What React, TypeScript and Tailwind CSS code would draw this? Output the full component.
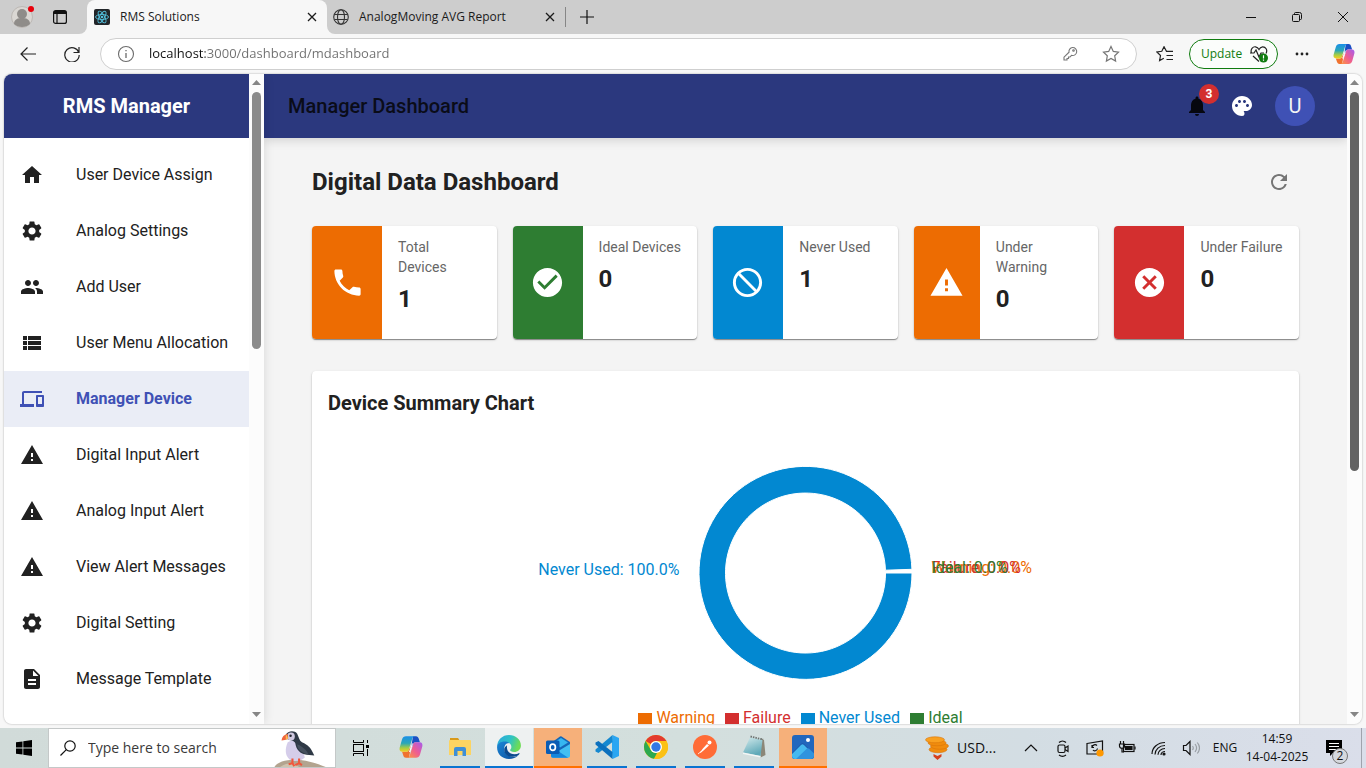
import React from 'react';
import {
  MdHome, MdSettings, MdPeople, MdViewList, MdDevices, MdWarning, MdDescription,
  MdNotifications, MdPalette, MdRefresh, MdPhone, MdCheckCircle, MdBlock, MdCancel,
} from 'react-icons/md';
import type { IconType } from 'react-icons';

interface MenuItem {
  label: string;
  icon: IconType;
  active?: boolean;
}

interface StatCard {
  label: string;
  value: number;
  icon: IconType;
  panel: string;
}

const menuItems: MenuItem[] = [
  { label: 'User Device Assign', icon: MdHome },
  { label: 'Analog Settings', icon: MdSettings },
  { label: 'Add User', icon: MdPeople },
  { label: 'User Menu Allocation', icon: MdViewList },
  { label: 'Manager Device', icon: MdDevices, active: true },
  { label: 'Digital Input Alert', icon: MdWarning },
  { label: 'Analog Input Alert', icon: MdWarning },
  { label: 'View Alert Messages', icon: MdWarning },
  { label: 'Digital Setting', icon: MdSettings },
  { label: 'Message Template', icon: MdDescription },
];

const cards: StatCard[] = [
  { label: 'Total Devices', value: 1, icon: MdPhone, panel: 'w-[70px] bg-[#ed6c02]' },
  { label: 'Ideal Devices', value: 0, icon: MdCheckCircle, panel: 'w-[70px] bg-[#2e7d32]' },
  { label: 'Never Used', value: 1, icon: MdBlock, panel: 'w-[70px] -scale-x-100 bg-[#0288d1]' },
  { label: 'Under Warning', value: 0, icon: MdWarning, panel: 'w-[66px] bg-[#ed6c02]' },
  { label: 'Under Failure', value: 0, icon: MdCancel, panel: 'w-[70px] bg-[#d32f2f]' },
];

const legend = [
  { label: 'Warning', text: 'text-[#ed6c02]', box: 'bg-[#ed6c02]' },
  { label: 'Failure', text: 'text-[#d32f2f]', box: 'bg-[#d32f2f]' },
  { label: 'Never Used', text: 'text-[#0288d1]', box: 'bg-[#0288d1]' },
  { label: 'Ideal', text: 'text-[#2e7d32]', box: 'bg-[#2e7d32]' },
];

/* ---------- logos ---------- */

const CopilotLogo = ({ id, className }: { id: string; className?: string }) => (
  <svg viewBox="0 0 24 24" className={className}>
    <defs>
      <linearGradient id={`${id}a`} x1="0" y1="0" x2="0" y2="1">
        <stop offset="0" stopColor="#1b8fe8" />
        <stop offset=".45" stopColor="#2aa7b8" />
        <stop offset=".75" stopColor="#a4cc45" />
        <stop offset="1" stopColor="#f7cf1d" />
      </linearGradient>
      <linearGradient id={`${id}b`} x1="1" y1="0" x2="0" y2="1">
        <stop offset="0" stopColor="#a45cf0" />
        <stop offset=".5" stopColor="#ee5c92" />
        <stop offset="1" stopColor="#ff9a3c" />
      </linearGradient>
    </defs>
    <path d="M14 1.200h3c1.500 0 2.300 1 2.700 2.300l1.200 3.700h-4.400c-1.300 0-2 .8-2.300 2L12 13z" fill="#1a4fc4" />
    <path d="M10 22.800H7c-1.500 0-2.300-1-2.700-2.300l-1.200-3.700h4.400c1.300 0 2-.8 2.300-2L12 11z" fill="#f0722e" />
    <path d="M7 1.200h9c-1.500 0-2.300 1-2.800 2.600L9.800 14.800c-.4 1.400-1.200 2-2.600 2H3.400c-2.500 0-3.300-2-2.700-4.300L3 4.500C3.700 2.300 5 1.200 7 1.200z" fill={`url(#${id}a)`} />
    <path d="M17 22.800H8c1.500 0 2.300-1 2.800-2.600l3.400-11c.4-1.400 1.200-2 2.600-2h3.800c2.500 0 3.300 2 2.700 4.300L21 19.500c-.7 2.200-2 3.300-4 3.300z" fill={`url(#${id}b)`} />
    <path d="M12.900 8.500h1.100l-2.800 8.500h-1.200z" fill="#fff" />
  </svg>
);

const ReactFavicon = () => (
  <svg viewBox="0 0 16 16" className="size-4 shrink-0">
    <rect width="16" height="16" rx="2" fill="#222529" />
    <g fill="none" stroke="#53c1de" strokeWidth=".9">
      <ellipse cx="8" cy="8" rx="6.500" ry="2.500" />
      <ellipse cx="8" cy="8" rx="6.500" ry="2.500" transform="rotate(60 8 8)" />
      <ellipse cx="8" cy="8" rx="6.500" ry="2.500" transform="rotate(120 8 8)" />
    </g>
    <circle cx="8" cy="8" r="1.300" fill="#53c1de" />
  </svg>
);

const Puffin = () => (
  <svg viewBox="0 0 56 40" className="mr-1.5 h-full w-14">
    <path d="M0 40c2-4 8-6 14-7s10-2 15 0c8 1 18 4 25 7z" fill="#b3a48f" />
    <path d="M6 40c4-3 8-4 14-4l6 4z" fill="#cfc3ae" />
    <path d="M14 14c-3 7-3 14 2 18 5 3 12 2 16-2l-4-14-8-5z" fill="#d5cdea" />
    <path d="M12 6c2-4 9-5 12-1 2 4 2 7 5 9 7 3 9 6 11 10l2 4-8-1c-7-1-11-5-12-12-1-3-5-3-8-4z" fill="#2f3946" />
    <path d="M24 16c5 2 10 6 12 11-7-2-12-5-12-11z" fill="#46505e" />
    <ellipse cx="17.500" cy="8" rx="4" ry="4.200" fill="#cfc8e0" />
    <circle cx="17" cy="7" r="1.300" fill="#20242c" />
    <path d="M14 5c-4 1-6 3-6.500 7 2 0 5-.5 7-2z" fill="#f0663c" />
    <path d="M12.500 5.800c-.8 1.800-.8 3.600-.2 5.300l2.200-1z" fill="#f5bd54" />
    <path d="M19 31v5l-4 1m4-1 2 3M26 31v5l-4 2m4-2 3 2" stroke="#f0563c" strokeWidth="2.200" fill="none" />
  </svg>
);

const ExplorerLogo = () => (
  <svg viewBox="0 0 24 24" className="size-6">
    <path d="M2 3h8l2 3H2z" fill="#d99a1b" />
    <path d="M2 5h20a1 1 0 0 1 1 1v14H1V6a1 1 0 0 1 1-1z" fill="#fcd462" />
    <path d="M6 21v-7a2 2 0 0 1 2-2h8a2 2 0 0 1 2 2v7h-3.500v-5h-5v5z" fill="#3f8fd6" />
  </svg>
);

const EdgeLogo = () => (
  <svg viewBox="0 0 24 24" className="size-[26px]">
    <defs>
      <linearGradient id="edgeTop" x1="0" y1="0" x2="1" y2=".3">
        <stop offset="0" stopColor="#2aa6dd" />
        <stop offset=".6" stopColor="#2fc3c4" />
        <stop offset="1" stopColor="#6ddc55" />
      </linearGradient>
      <linearGradient id="edgeBody" x1="0" y1="0" x2="1" y2="1">
        <stop offset="0" stopColor="#1b86d6" />
        <stop offset="1" stopColor="#0c4f9c" />
      </linearGradient>
    </defs>
    <path d="M1 12C1 5.500 6 1 12 1s11 4.300 11 9.500c0 3.800-2.900 6-6.200 6-2.500 0-3.800-.8-3.800-1.700 0-.6 1.200-1 1.200-2.900 0-2.300-2.200-4.400-5.700-4.400C4 7.500 1.300 10 1 12z" fill="url(#edgeTop)" />
    <path d="M1 12c.2-3 3.300-5 7-5 1.500 0 3 .4 4.200 1.200C9 8.200 7.600 11 7.600 13.500c0 4.500 4 7.500 8 7.500 1.700 0 3.500-.5 5-1.400C18.500 22 15.500 23 12 23 5.500 23 .8 18 1 12z" fill="url(#edgeBody)" />
    <path d="M10.200 10.300c-1.600 1-2.600 2.300-2.600 4.200 0 4 3.600 6.800 8 6.500 2-.1 3.800-.7 5-1.400 1-.9 1.400-1.600.9-2-4.800 2.700-12.600.6-11.300-7.300z" fill="#0b4a8e" />
  </svg>
);

const OutlookLogo = () => (
  <svg viewBox="0 0 24 24" className="size-6">
    <path d="M5 8 14 1.500a1.500 1.500 0 0 1 1.600 0L24 7v5L14 18 5 12z" fill="#1566b7" />
    <path d="M8 7.500 15 3l7 4.500-8 5z" fill="#36b6f0" />
    <path d="M24 9v12a1.800 1.800 0 0 1-1.800 1.800H6.800A1.800 1.800 0 0 1 5 21v-4l9-2z" fill="#43bff2" />
    <path d="M5 15v6a1.800 1.800 0 0 0 1.800 1.800h15.400L12 16z" fill="#1687dc" />
    <rect x="0" y="5.500" width="13.500" height="13.500" rx="1.500" fill="#0a5cb5" />
    <ellipse cx="6.700" cy="12.200" rx="2.700" ry="3.100" fill="none" stroke="#fff" strokeWidth="1.700" />
  </svg>
);

const VsCodeLogo = () => (
  <svg viewBox="0 0 24 24" className="size-6">
    <path d="M17.500 0 24 3v18l-6.500 3L17 17V7z" fill="#2aa6f2" />
    <path d="M17.500 0v7L3.500 18 .5 16.500v-2z" fill="#1488d0" />
    <path d="M17.500 24v-7L3.500 6 .5 7.500v2z" fill="#0b70bd" />
  </svg>
);

const ChromeLogo = () => (
  <svg viewBox="0 0 24 24" className="size-6">
    <circle cx="12" cy="12" r="12" fill="#fbc116" />
    <path d="M1.600 6A12 12 0 0 1 22.400 6H12a6 6 0 0 0-5.200 3z" fill="#e33b2e" />
    <path d="M1.600 6 6.800 15A6 6 0 0 0 12 18h1l-3 5.800A12 12 0 0 1 1.600 6z" fill="#2da94f" />
    <path d="M22.400 6A12 12 0 0 1 12 24h-2l7.200-9A6 6 0 0 0 12 6z" fill="#fbc116" />
    <circle cx="12" cy="12" r="6" fill="#fff" />
    <circle cx="12" cy="12" r="4.700" fill="#3478e5" />
  </svg>
);

const PostmanLogo = () => (
  <svg viewBox="0 0 24 24" className="size-6">
    <circle cx="12" cy="12" r="12" fill="#ff6c37" />
    <path d="m14 9 2 1.500-5.500 5-3 2.500-.5-.5 2.500-3.500z" fill="#fff" />
    <circle cx="16.500" cy="7.500" r="2" fill="#fff" />
    <path d="m5 19 3-2.500" stroke="#fff" strokeWidth=".8" />
  </svg>
);

const NotepadLogo = () => (
  <svg viewBox="0 0 24 24" className="size-6">
    <defs>
      <linearGradient id="padFill" x1="0" y1="0" x2=".4" y2="1">
        <stop offset="0" stopColor="#d3eaec" />
        <stop offset="1" stopColor="#5fa9b8" />
      </linearGradient>
    </defs>
    <path d="m19 3 3 2 1.500 15-5 2.500z" fill="#8b8778" />
    <path d="M8 2.500 20.500 5l-2 16L1 17.500z" fill="url(#padFill)" />
    <path d="m1 17.500 17.500 3.500v1.500L1 19z" fill="#f2f6f5" />
    <path d="m8.500 1.500 12.500 3" stroke="#6d7473" strokeWidth="1.800" strokeDasharray="1.500 1" />
  </svg>
);

const PhotosLogo = () => (
  <svg viewBox="0 0 24 24" className="size-6">
    <rect x="1" y="0" width="22" height="24" rx="3" fill="#2267bd" />
    <path d="m1 18 9-9a2 2 0 0 1 3 0l10 10v2a3 3 0 0 1-3 3H4a3 3 0 0 1-3-3z" fill="#1a56a8" />
    <path d="m1 19 9-9a2 2 0 0 1 3 0l4 4-10 10H4a3 3 0 0 1-3-3z" fill="#45b9ef" />
    <path d="M5 24 15.500 14a2 2 0 0 1 3 0l4.500 4.500V21a3 3 0 0 1-3 3z" fill="#2f93de" />
    <circle cx="17" cy="5" r="2" fill="#fff" />
  </svg>
);

/* ---------- browser frame ---------- */

const CloseIcon = () => (
  <svg viewBox="0 0 10 10" className="size-[10px]" stroke="#1b1b1b" strokeWidth="1.300">
    <path d="m1 1 8 8M9 1 1 9" />
  </svg>
);

const TabStrip = () => (
  <div className="flex h-[34px] shrink-0 bg-[#f7f7f7] text-xs text-[#1b1b1b]">
    <div className="flex w-[87px] items-center rounded-br-lg bg-[#cdcdcd] pl-[11px]">
      <button aria-label="Profile" className="relative">
        <svg viewBox="0 0 22 22" className="size-[22px]">
          <circle cx="11" cy="11" r="10.500" fill="#dad7d3" stroke="#bcb8b4" />
          <circle cx="11" cy="8" r="5" fill="#8f8c89" />
          <path d="M3 18c0-5 4-6 8-6s8 1 8 6c-4 4-12 4-16 0z" fill="#8f8c89" />
        </svg>
        <span className="absolute top-0 -right-px size-[6px] rounded-full bg-[#e8000b]" />
      </button>
      <button aria-label="Tab actions" className="ml-5">
        <svg viewBox="0 0 14 14" className="size-[14px]" fill="none" stroke="#111">
          <rect x=".6" y=".6" width="12.800" height="12.800" rx="2" strokeWidth="1.200" />
          <path d="M1 2.500h12" strokeWidth="3" />
          <path d="M4 3v10" strokeWidth="1.200" />
        </svg>
      </button>
    </div>
    <div className="w-60 bg-[#cdcdcd]">
      <div className="flex h-full items-center rounded-t-lg bg-[#f7f7f7] pr-[10px] pl-[7px]">
        <ReactFavicon />
        <span className="ml-[10px] flex-1">RMS Solutions</span>
        <button aria-label="Close tab"><CloseIcon /></button>
      </div>
    </div>
    <div className="flex flex-1 items-center rounded-bl-lg bg-[#cdcdcd]">
      <div className="flex h-5 w-[239px] items-center border-r border-[#868686] pr-[10px] pl-[6px]">
        <svg viewBox="0 0 16 16" className="size-4" fill="none" stroke="#333" strokeWidth="1.100">
          <circle cx="8" cy="8" r="7.300" />
          <ellipse cx="8" cy="8" rx="3.500" ry="7.300" />
          <path d="M1.500 5.500h13M1.500 10.500h13" />
        </svg>
        <span className="ml-[10px] flex-1">AnalogMoving AVG Report</span>
        <button aria-label="Close tab"><CloseIcon /></button>
      </div>
      <button aria-label="New tab" className="ml-[14px]">
        <svg viewBox="0 0 14 14" className="size-[14px]" stroke="#111" strokeWidth="1.200">
          <path d="M7 0v14M0 7h14" />
        </svg>
      </button>
      <div className="ml-auto flex">
        <button aria-label="Minimize" className="flex w-[46px] items-center justify-center">
          <svg viewBox="0 0 10 10" className="size-[10px]" stroke="#111"><path d="M0 5.500h10" /></svg>
        </button>
        <button aria-label="Restore" className="flex w-[46px] items-center justify-center">
          <svg viewBox="0 0 10 10" className="size-[10px]" fill="none" stroke="#111">
            <rect x=".5" y="2.500" width="7" height="7" rx="1" />
            <path d="M2.500 2.500v-1a1 1 0 0 1 1-1h4a2 2 0 0 1 2 2v4a1 1 0 0 1-1 1h-1" />
          </svg>
        </button>
        <button aria-label="Close" className="flex w-[46px] items-center justify-center">
          <svg viewBox="0 0 10 10" className="size-[10px]" stroke="#111"><path d="m0 0 10 10M10 0 0 10" /></svg>
        </button>
      </div>
    </div>
  </div>
);

const Toolbar = () => (
  <div className="flex h-10 shrink-0 items-center pr-1 pl-1.5">
    <button aria-label="Back" className="flex w-11 justify-center">
      <svg viewBox="0 0 16 14" className="h-[14px] w-4" fill="none" stroke="#222" strokeWidth="1.200">
        <path d="M16 7H1M7.500.5 1 7l6.500 6.500" />
      </svg>
    </button>
    <button aria-label="Refresh page" className="flex w-11 justify-center">
      <svg viewBox="0 0 16 16" className="size-4" fill="none" stroke="#222" strokeWidth="1.200">
        <path d="M14.800 6.500A7.200 7.200 0 1 0 15.200 9M15 1v5.500H9.500" />
      </svg>
    </button>
    <div className="ml-1.5 flex h-8 flex-1 items-center rounded-full border border-[#cfcfcf] bg-white px-4">
      <svg viewBox="0 0 18 18" className="size-[18px] shrink-0" fill="none" stroke="#6b6b6b" strokeWidth="1.100">
        <circle cx="9" cy="9" r="7.500" />
        <path d="M9 8v5M9 5v1.300" strokeWidth="1.300" />
      </svg>
      <input
        aria-label="Address"
        defaultValue="localhost:3000/dashboard/mdashboard"
        className="ml-[14px] min-w-0 flex-1 bg-[linear-gradient(90deg,#111_56px,#6f6f6f_56px)] bg-clip-text text-[13px] text-transparent outline-none"
      />
      <button aria-label="Passwords" className="mr-6">
        <svg viewBox="0 0 16 16" className="size-4" fill="none" stroke="#767676" strokeWidth="1.100">
          <path d="M10.500 1.500a4 4 0 1 1-1 7.800L8 11H6.500v1.500H5V14H2v-2.800l5-5a4 4 0 0 1 3.500-4.700z" />
          <circle cx="11.500" cy="4.500" r=".8" />
        </svg>
      </button>
      <button aria-label="Add to favorites">
        <svg viewBox="0 0 18 18" className="size-[18px]" fill="none" stroke="#767676" strokeWidth="1.200">
          <path d="m9 1.500 2.300 4.900 5.200.7-3.800 3.700.9 5.300L9 13.500l-4.600 2.600.9-5.300L1.500 7.100l5.200-.7z" />
        </svg>
      </button>
    </div>
    <button aria-label="Favorites" className="ml-1 flex w-12 justify-center">
      <svg viewBox="0 0 18 16" className="h-4 w-[18px]" fill="none" stroke="#222" strokeWidth="1.200">
        <path d="M10.500 5.300 8 .8 5.800 5.300.9 6l3.600 3.500-.9 5 4.200-2.300M8 .8l2.500 4.500H17M10.500 9.500H17M10.500 13.500H17" />
      </svg>
    </button>
    <button className="flex h-[30px] w-[89px] items-center justify-between rounded-full border border-[#107c10] bg-[#fbfdfb] pr-[9px] pl-[11px] text-xs text-[#107c10]">
      Update
      <svg viewBox="0 0 18 18" className="size-[18px]" fill="none" stroke="#222" strokeWidth="1.200">
        <path d="M1.500 8C0 4 3 1.500 5.500 1.800 7.500 2 8.500 3.500 9 4.500c.5-1 1.500-2.500 3.500-2.700 3-.2 5.500 3 3.500 6.700M3 11l6 5.500" />
        <path d="M0 8h4l2-3 3 7 2-4h3" />
        <circle cx="13.500" cy="13" r="4.500" fill="#107c10" stroke="none" />
        <path d="M13.500 10.300v3.200M13.500 14.500v1.200" stroke="#fff" />
      </svg>
    </button>
    <button aria-label="Settings and more" className="flex w-12 justify-center">
      <svg viewBox="0 0 14 4" className="h-1 w-[14px]" fill="#222">
        <circle cx="2" cy="2" r="1.400" /><circle cx="7" cy="2" r="1.400" /><circle cx="12" cy="2" r="1.400" />
      </svg>
    </button>
    <button aria-label="Copilot" className="flex w-9 justify-center">
      <CopilotLogo id="cpTop" className="h-[22px] w-6" />
    </button>
  </div>
);

const Arrow = ({ down }: { down?: boolean }) => (
  <svg viewBox="0 0 9 5" className="h-[5px] w-[9px] shrink-0" fill="#868686">
    <path d={down ? 'M0 0h9L4.500 5z' : 'M0 5h9L4.500 0z'} />
  </svg>
);

const Scrollbar = ({ thumb }: { thumb: string }) => (
  <div className="flex w-[15px] shrink-0 flex-col items-center justify-between bg-[#fcfcfc] pt-[6px] pb-[7px]">
    <Arrow />
    <div className="mt-[7px] flex w-[9px] flex-1 flex-col">
      <div className={`rounded-full ${thumb}`} />
    </div>
    <Arrow down />
  </div>
);

/* ---------- application ---------- */

const Sidebar = () => (
  <aside className="z-10 flex shrink-0 bg-white shadow-[0_0_10px_rgba(0,0,0,0.12)]">
    <div className="w-[245px] overflow-hidden">
      <div className="flex h-16 items-center justify-center bg-[#2b387e]">
        <h1 className="text-xl font-bold text-white">RMS Manager</h1>
      </div>
      <nav className="border-t border-white pt-2">
        {menuItems.map(({ label, icon: Icon, active }) => (
          <a
            key={label}
            href="#"
            className={`flex h-14 items-center gap-8 pl-4 text-base whitespace-nowrap
              ${active ? 'bg-[#eaedf6] font-bold text-[#3f51b5]' : 'text-[#212121]'}`}
          >
            <Icon size={24} className="shrink-0" />
            {label}
          </a>
        ))}
      </nav>
    </div>
    <Scrollbar thumb="h-[257px] bg-[#8b8b8b]" />
  </aside>
);

const AppHeader = () => (
  <header className="flex h-16 shrink-0 items-center bg-[#2b387e] pr-8 pl-6 shadow-[0_2px_10px_rgba(0,0,0,0.15)]">
    <h2 className="flex-1 text-xl font-medium text-[#0a0c18]">Manager Dashboard</h2>
    <div className="flex items-center gap-[21px]">
      <button aria-label="Notifications" className="relative text-[#06070f]">
        <MdNotifications size={24} />
        <span className="absolute -top-[10px] -right-[10px] flex size-5 items-center justify-center rounded-full bg-[#d32f2f] text-xs font-bold text-white">3</span>
      </button>
      <button aria-label="Theme" className="text-white"><MdPalette size={24} /></button>
      <button className="flex size-10 items-center justify-center rounded-full bg-[#3f51b5] text-xl text-[#f4f4f4]">U</button>
    </div>
  </header>
);

const DeviceChart = () => (
  <svg viewBox="0 0 600 264" className="mt-4 h-[264px] w-full overflow-visible text-base">
    <path
      d="M406.440 134.300A106.500 106.500 0 1 0 406.500 138H380A80 80 0 1 1 379.950 135.210Z"
      fill="#0288d1"
      stroke="#fff"
    />
    <text x="174" y="140" textAnchor="end" fill="#0288d1">Never Used: 100.0%</text>
    <text x="426" y="138" fill="#ed6c02">Warning: 0.0%</text>
    <text x="426" y="138" fill="#d32f2f">Failure: 0.0%</text>
    <text x="426" y="138" fill="#2e7d32">Ideal: 0.0%</text>
  </svg>
);

const Dashboard = () => (
  <main className="flex-1 px-12 pt-6">
    <div className="mb-6 flex h-10 items-center justify-between">
      <h3 className="text-2xl font-bold text-[#212121]">Digital Data Dashboard</h3>
      <button aria-label="Refresh" className="flex size-10 items-center justify-center text-[#757575]">
        <MdRefresh size={24} />
      </button>
    </div>

    <div className="grid grid-cols-5 gap-4">
      {cards.map(({ label, value, icon: Icon, panel }) => (
        <div key={label} className="flex overflow-hidden rounded bg-white shadow-[0_1px_1px_rgba(0,0,0,0.4),0_1px_3px_rgba(0,0,0,0.12)]">
          <div className={`flex shrink-0 items-center justify-center text-white ${panel}`}>
            <Icon size={35} />
          </div>
          <div className="flex-1 pt-[11px] pr-4 pb-6 pl-4">
            <p className="text-sm text-[#666]">{label}</p>
            <p className="mt-1.5 text-2xl font-bold text-[#212121]">{value}</p>
          </div>
        </div>
      ))}
    </div>

    <section className="mt-8 rounded bg-white p-4 shadow-[0_1px_1px_rgba(0,0,0,0.4),0_1px_3px_rgba(0,0,0,0.12)]">
      <h3 className="text-xl leading-8 font-bold text-[#212121]">Device Summary Chart</h3>
      <DeviceChart />
      <ul className="mt-[7px] flex justify-center gap-[10px] pr-2.5">
        {legend.map((item) => (
          <li key={item.label} className={`flex items-center gap-1 ${item.text}`}>
            <span className={`h-[11px] w-[14px] ${item.box}`} />
            {item.label}
          </li>
        ))}
      </ul>
    </section>
  </main>
);

/* ---------- taskbar ---------- */

const taskApps = [
  { name: 'Copilot', logo: <CopilotLogo id="cpTask" className="size-6" />, slot: '', line: '' },
  { name: 'File Explorer', logo: <ExplorerLogo />, slot: '', line: 'w-10 bg-[#0a74d1]' },
  { name: 'Edge', logo: <EdgeLogo />, slot: 'bg-[#eef1f1]', line: 'w-12 bg-[#0a74d1]' },
  { name: 'Outlook', logo: <OutlookLogo />, slot: 'bg-[#f6b07a]', line: 'w-12 bg-[#ff7000]' },
  { name: 'Visual Studio Code', logo: <VsCodeLogo />, slot: '', line: 'w-10 bg-[#0a74d1]' },
  { name: 'Chrome', logo: <ChromeLogo />, slot: '', line: 'w-10 bg-[#0a74d1]' },
  { name: 'Postman', logo: <PostmanLogo />, slot: '', line: 'w-10 bg-[#0a74d1]' },
  { name: 'Notepad', logo: <NotepadLogo />, slot: '', line: 'w-10 bg-[#0a74d1]' },
  { name: 'Photos', logo: <PhotosLogo />, slot: 'bg-[#f6b07a]', line: 'w-12 bg-[#ff7000]' },
];

const TrayButton = ({ label, children }: { label: string; children: React.ReactNode }) => (
  <button aria-label={label} className="flex w-8 items-center justify-center">
    <svg viewBox="0 0 18 18" className="size-[18px]" fill="none" stroke="#111" strokeWidth="1.200">{children}</svg>
  </button>
);

const Taskbar = () => (
  <footer className="mt-1 flex h-10 shrink-0 bg-[linear-gradient(90deg,#d1dbd9,#d3dfdd_50%,#d3dde3_75%,#dadeea)] text-xs text-[#111]">
    <button aria-label="Start" className="flex w-12 items-center justify-center">
      <svg viewBox="0 0 16 16" className="size-4" fill="#000">
        <path d="M0 2.300 6.500 1.400v6.100H0zM7.300 1.300 16 0v7.500H7.300zM0 8.400h6.500v6.200L0 13.700zM7.300 8.400H16V16l-8.700-1.300z" />
      </svg>
    </button>
    <div className="flex w-72 items-center border border-[#c4c8c8] bg-white pl-[11px]">
      <svg viewBox="0 0 16 16" className="size-4 shrink-0" fill="none" stroke="#111" strokeWidth="1.200">
        <circle cx="10" cy="6" r="5.200" />
        <path d="M6.300 9.700.5 15.500" />
      </svg>
      <input
        aria-label="Search"
        placeholder="Type here to search"
        className="ml-3 min-w-0 flex-1 text-sm outline-none placeholder:text-[#3a3a3a]"
      />
      <Puffin />
    </div>
    <button aria-label="Task view" className="mr-px flex w-[50px] items-center justify-center">
      <svg viewBox="0 0 18 18" className="size-[18px]" fill="none" stroke="#000" strokeWidth="1">
        <path d="M1.500 1v2.500h10V1M1.500 17v-2.500h10V17M15.500 1v3M15.500 10v7" />
        <rect x="1.500" y="5.500" width="10" height="7" />
        <path d="M14 6h3v3h-3z" fill="#000" stroke="none" />
      </svg>
    </button>
    <div className="flex gap-px">
      {taskApps.map((app) => (
        <button key={app.name} aria-label={app.name} className={`flex w-12 flex-col items-center ${app.slot}`}>
          <span className="flex flex-1 items-center">{app.logo}</span>
          <span className={`h-0.5 ${app.line}`} />
        </button>
      ))}
    </div>

    <div className="ml-auto flex">
      <button className="flex w-24 items-center gap-2 px-1.5 text-sm">
        <svg viewBox="0 0 24 24" className="size-6 shrink-0">
          <g fill="#f08c0e" stroke="#d97408" strokeWidth=".6">
            <ellipse cx="13" cy="13.500" rx="9" ry="3.200" />
            <ellipse cx="14.500" cy="10" rx="9" ry="3.200" />
            <ellipse cx="12" cy="6.800" rx="9" ry="3" />
            <ellipse cx="10" cy="3.800" rx="9.500" ry="3" fill="#f9a01f" />
          </g>
          <path d="m8.500 18 4 2 4-2v2.500l-4 3.500-4-3.500z" fill="#d6401c" />
        </svg>
        USD...
      </button>
      <TrayButton label="Show hidden icons"><path d="m3 12 6-6 6 6" /></TrayButton>
      <TrayButton label="Meet now">
        <rect x="4" y="6" width="7" height="7.500" rx="1.500" />
        <path d="m11 9 3-2v5.500l-3-2M5 3.500c2-2 5-2 7 0M5 16c2 1.500 5 1.500 7 0" />
      </TrayButton>
      <TrayButton label="Updates">
        <path d="M1 4.500 16.500 2v13H1zM11 6.500C9.500 5 6.500 5.500 6 8.500M6 6v2.500h2M7 11c1 1.500 4 1 4.500-1.500" />
        <circle cx="14" cy="14" r="3.600" fill="#ff9800" stroke="none" />
      </TrayButton>
      <TrayButton label="Battery">
        <rect x="5.500" y="5.500" width="10.500" height="7" />
        <path d="M7.500 7.500H14v3H7.500z" fill="#111" />
        <path d="M17 7.500v3M2.500 2v3M5.500 2v3M1.500 5h5v2c0 3-5 3-5 0zM4 9v4h2" />
      </TrayButton>
      <TrayButton label="Wi-Fi">
        <path d="M2 15C2 8.500 8 3.500 15 3.500M5 15.500C5 10.500 9.500 6.500 15 6.500M8 15.800c0-3.500 3-6.300 7-6.300M11 16c0-2 2-3.500 4-3.500" />
        <circle cx="14" cy="15" r="1" fill="#111" />
      </TrayButton>
      <TrayButton label="Volume">
        <path d="M1.500 6.500H4l4-4v13l-4-4H1.500z" />
        <path d="M10.500 7c1 1.300 1 2.700 0 4M13 5c2 2.500 2 5.500 0 8M15.300 3.500c2.800 3.500 2.800 7.500 0 11" stroke="#999fa5" />
      </TrayButton>
      <button className="w-9">ENG</button>
      <button className="w-[68px] text-center leading-[18px] whitespace-nowrap">
        14:59<br />14-04-2025
      </button>
      <button aria-label="Notifications center" className="relative flex w-[46px] items-center justify-center">
        <svg viewBox="0 0 16 16" className="size-4">
          <path d="M0 0h16v13H7l-3 3v-3H0z" fill="#000" />
          <path d="M3 3.500h10M3 6.500h10M3 9.500h7" stroke="#fff" strokeWidth="1.200" />
        </svg>
        <span className="absolute right-[9px] bottom-1 flex size-4 items-center justify-center rounded-full border border-[#777] bg-[#d5d8dd] text-xs">2</span>
      </button>
      <span className="mr-1 ml-1 w-px bg-[#9fa3ad]" />
    </div>
  </footer>
);

export default function App() {
  return (
    <div className="flex h-screen flex-col overflow-hidden bg-[#f7f7f7] font-['Open_Sans','Noto_Sans',sans-serif]">
      <TabStrip />
      <Toolbar />
      <div className="mx-1 flex min-h-0 flex-1 overflow-hidden rounded-lg bg-[#f4f4f4] font-[Roboto,sans-serif] shadow-[0_0_2px_rgba(0,0,0,0.35)]">
        <Sidebar />
        <div className="flex min-w-0 flex-1 flex-col overflow-hidden">
          <AppHeader />
          <Dashboard />
        </div>
        <Scrollbar thumb="h-[379px] bg-[#636363]" />
      </div>
      <Taskbar />
    </div>
  );
}
